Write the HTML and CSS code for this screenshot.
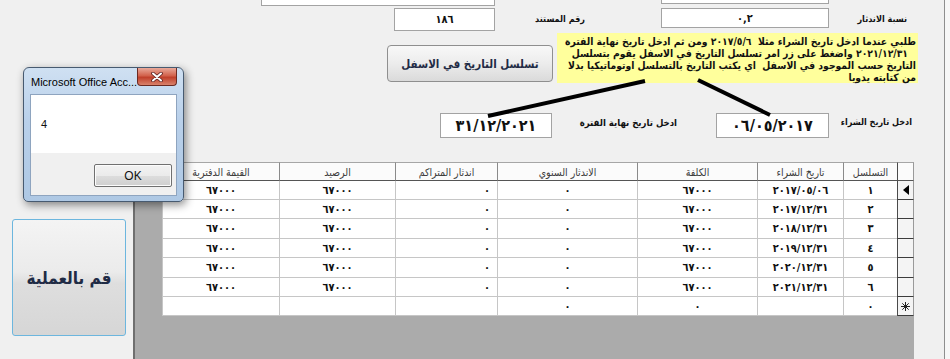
FILE: index.html
```html
<!DOCTYPE html>
<html lang="ar">
<head>
	<meta charset="UTF-8">
	<title>تسلسل التاريخ</title>
	<link rel="stylesheet" href="styles.css">
</head>
<body>
<div class="form">
	<div class="row top">
		<div class="stub stub-a"></div>
		<div class="stub stub-b"></div>
	</div>

	<div class="row doc">
		<div class="field f-doc">١٨٦</div>
		<div class="lbl l-doc">رقم المستند</div>
		<div class="field f-rate">٠,٢</div>
		<div class="lbl l-rate">نسبة الاندثار</div>
	</div>

	<div class="row note-row">
		<div class="run-btn" dir="rtl">تسلسل التاريخ في الاسفل</div>
		<div class="note" dir="rtl">
			<div>طلبي عندما ادخل تاريخ الشراء مثلا&nbsp; ٢٠١٧/٥/٦ ومن ثم ادخل تاريخ نهاية الفترة</div>
			<div class="indent">٢٠٢١/١٢/٣١ واضغط على زر امر تسلسل التاريخ في الاسفل يقوم بتسلسل</div>
			<div>التاريخ حسب الموجود في الاسفل&nbsp; اي يكتب التاريخ بالتسلسل اوتوماتيكيا بدلا</div>
			<div>من كتابته يدويا</div>
		</div>
	</div>

	<div class="row dates">
		<div class="field f-end">٣١/١٢/٢٠٢١</div>
		<div class="lbl l-end">ادخل تاريخ نهاية الفترة</div>
		<div class="field f-buy">٠٦/٠٥/٢٠١٧</div>
		<div class="lbl l-buy">ادخل تاريخ الشراء</div>
	</div>

	<div class="row lower">
		<div class="big-btn" dir="rtl">قم بالعملية</div>
		<div class="sub">
			<table class="sheet" dir="rtl">
				<thead>
					<tr>
						<th class="sel"></th>
						<th>التسلسل</th>
						<th>تاريخ الشراء</th>
						<th>الكلفة</th>
						<th>الاندثار السنوي</th>
						<th>اندثار المتراكم</th>
						<th>الرصيد</th>
						<th>القيمة الدفترية</th>
					</tr>
				</thead>
				<tbody>
					<tr>
						<td class="sel"><span class="cur"></span></td>
						<td>١</td><td>٢٠١٧/٠٥/٠٦</td><td>٦٧٠٠٠</td><td>٠</td><td class="r">٠</td><td>٦٧٠٠٠</td><td>٦٧٠٠٠</td>
					</tr>
					<tr>
						<td class="sel"></td>
						<td>٢</td><td>٢٠١٧/١٢/٣١</td><td>٦٧٠٠٠</td><td>٠</td><td class="r">٠</td><td>٦٧٠٠٠</td><td>٦٧٠٠٠</td>
					</tr>
					<tr>
						<td class="sel"></td>
						<td>٣</td><td>٢٠١٨/١٢/٣١</td><td>٦٧٠٠٠</td><td>٠</td><td class="r">٠</td><td>٦٧٠٠٠</td><td>٦٧٠٠٠</td>
					</tr>
					<tr>
						<td class="sel"></td>
						<td>٤</td><td>٢٠١٩/١٢/٣١</td><td>٦٧٠٠٠</td><td>٠</td><td class="r">٠</td><td>٦٧٠٠٠</td><td>٦٧٠٠٠</td>
					</tr>
					<tr>
						<td class="sel"></td>
						<td>٥</td><td>٢٠٢٠/١٢/٣١</td><td>٦٧٠٠٠</td><td>٠</td><td class="r">٠</td><td>٦٧٠٠٠</td><td>٦٧٠٠٠</td>
					</tr>
					<tr>
						<td class="sel"></td>
						<td>٦</td><td>٢٠٢١/١٢/٣١</td><td>٦٧٠٠٠</td><td>٠</td><td class="r">٠</td><td>٦٧٠٠٠</td><td>٦٧٠٠٠</td>
					</tr>
					<tr>
						<td class="sel">
							<svg class="star" width="9" height="9" viewBox="0 0 9 9">
								<path d="M4.5 0V9M0 4.5H9M1.3 1.3L7.7 7.7M7.7 1.3L1.3 7.7" stroke="#222" stroke-width="1"/>
							</svg>
						</td>
						<td>٠</td><td></td><td>٠</td><td>٠</td><td></td><td></td><td></td>
					</tr>
				</tbody>
			</table>
		</div>
	</div>

	<svg class="arrows" width="950" height="359">
		<line x1="645" y1="81" x2="488" y2="116" stroke="#000" stroke-width="4"/>
		<line x1="698" y1="80" x2="770" y2="115" stroke="#000" stroke-width="4"/>
	</svg>

	<div class="msgbox">
		<div class="msg-title">
			<span>Microsoft Office Acc...</span>
			<div class="close">
				<svg width="12" height="10" viewBox="0 0 12 10">
					<path d="M2 1.5L10 8.5M10 1.5L2 8.5" stroke="#5a2020" stroke-width="3.6" stroke-linecap="round"/>
					<path d="M2 1.5L10 8.5M10 1.5L2 8.5" stroke="#fff" stroke-width="2" stroke-linecap="round"/>
				</svg>
			</div>
		</div>
		<div class="msg-body">
			<div class="msg-text">4</div>
			<div class="msg-foot">
				<div class="ok">OK</div>
			</div>
		</div>
	</div>
</div>
</body>
</html>
```

FILE: styles.css
```css
*{
	box-sizing: border-box;
}
body{
	margin: 0;
	width: 950px;
	height: 359px;
	overflow: hidden;
	background-color: #f7f7f7;
	font-family: "DejaVu Sans Condensed", "DejaVu Sans", sans-serif;
	font-stretch: condensed;
	color: #111;
}
.form{
	position: relative;
	width: 945px;
	height: 359px;
	background-color: #f0f0f0;
	border-right: 1px solid #8e8e8e;
}
.row{
	display: flex;
	align-items: flex-start;
}

/* text boxes and labels */
.top{
	height: 8px;
}
.stub{
	background-color: #fff;
	border: 1px solid #a3a3a3;
	border-top: 0;
}
.stub-a{
	margin-left: 261px;
	width: 234px;
	height: 6px;
}
.stub-b{
	margin-left: 166px;
	width: 168px;
	height: 4px;
}
.field{
	display: flex;
	align-items: center;
	justify-content: center;
	background-color: #fff;
	border: 1px solid #a3a3a3;
	font-weight: bold;
	font-size: 11px;
}
.lbl{
	direction: rtl;
	text-align: right;
	font-size: 9px;
	font-weight: bold;
	white-space: nowrap;
}
.doc{
	height: 25px;
}
.f-doc{
	margin-left: 394px;
	width: 101px;
	height: 23px;
}
.l-doc{
	width: 90px;
	padding-top: 6px;
}
.f-rate{
	margin-left: 76px;
	width: 168px;
	height: 20px;
}
.l-rate{
	width: 78px;
	padding-top: 6px;
}

/* button and note */
.note-row{
	height: 50px;
}
.run-btn{
	display: flex;
	align-items: center;
	justify-content: center;
	margin-left: 387px;
	margin-top: 12px;
	width: 166px;
	height: 37px;
	border: 1px solid #8f8f8f;
	border-radius: 4px;
	background: linear-gradient(#f8f8f8, #ececec 50%, #dadada);
	font-size: 11.5px;
	font-weight: bold;
	color: #1f2b45;
	white-space: nowrap;
}
.note{
	margin-left: 4px;
	width: 361px;
	height: 50px;
	padding: 2px 2px 0 0;
	background-color: #ffff9c;
	font-size: 10.3px;
	font-weight: bold;
	line-height: 12px;
	text-align: right;
	white-space: nowrap;
}
.note .indent{
	padding-right: 8px;
}

.dates{
	margin-top: 30px;
	height: 25px;
}
.f-end{
	margin-left: 440px;
	width: 112px;
	height: 25px;
	font-size: 16px;
	font-stretch: normal;
}
.l-end{
	width: 125px;
	padding-top: 4px;
	font-size: 9.5px;
}
.f-buy{
	margin-left: 39px;
	width: 113px;
	height: 25px;
	font-size: 16px;
	font-stretch: normal;
}
.l-buy{
	width: 83px;
	padding-top: 4px;
}

/* lower part */
.lower{
	margin-top: 24px;
	height: 197px;
}
.big-btn{
	display: flex;
	align-items: center;
	justify-content: center;
	margin-left: 12px;
	margin-top: 57px;
	width: 114px;
	height: 117px;
	border: 1px solid #6cb6de;
	border-radius: 3px;
	background: linear-gradient(#f4f4f4, #ebebeb 45%, #dedede 55%, #d6d6d6);
	font-size: 17px;
	font-weight: bold;
	color: #1f2b45;
	white-space: nowrap;
}
.sub{
	display: flex;
	justify-content: flex-end;
	align-items: flex-start;
	margin-left: 7px;
	width: 781px;
	height: 197px;
	background-color: #ababab;
	border-left: 2px solid #6f6f6f;
}
.sheet{
	width: 752px;
	table-layout: fixed;
	border-collapse: separate;
	border-spacing: 0;
	background-color: #fff;
}
.sheet th, .sheet td{
	padding: 0;
	border-left: 1px solid #c6c6c6;
	border-bottom: 1px solid #c6c6c6;
}
.sheet th{
	height: 19px;
	font-size: 10.5px;
	font-weight: normal;
	color: #3c3c3c;
	background-color: #fbfbfb;
	border-top: 1px solid #a6a6a6;
	border-left-color: #8a8a8a;
	border-bottom-color: #555;
	white-space: nowrap;
}
.sheet td{
	height: 19px;
	text-align: center;
	font-size: 11px;
	font-stretch: normal;
	font-weight: bold;
}
.sheet tbody tr:nth-child(3) td,
.sheet tbody tr:nth-child(5) td{
	height: 20px;
}
.sheet td.r{
	text-align: right;
	padding-right: 7px;
}
.sheet .sel{
	width: 17px;
	border-left-color: #4a4a4a;
	border-right: 1px solid #9a9a9a;
}
.sheet td.sel{
	background-color: #f4f4f4;
	border-bottom-color: #3c3c3c;
	line-height: 0;
}
.sheet th:nth-child(2){ width: 54px; }
.sheet th:nth-child(3){ width: 86px; }
.sheet th:nth-child(4){ width: 120px; }
.sheet th:nth-child(5){ width: 140px; }
.sheet th:nth-child(6){ width: 102px; }
.sheet th:nth-child(7){ width: 116px; }
.sheet th:nth-child(8){ width: 117px; }
.cur{
	display: inline-block;
	width: 0;
	height: 0;
	border-top: 5px solid transparent;
	border-bottom: 5px solid transparent;
	border-right: 6px solid #000;
}

.arrows{
	position: absolute;
	left: 0;
	top: 0;
	pointer-events: none;
}

/* message box */
.msgbox{
	position: absolute;
	left: 23px;
	top: 67px;
	width: 161px;
	height: 135px;
	padding: 0 6px 5px 6px;
	border: 1px solid #475a70;
	border-radius: 6px 6px 5px 5px;
	background: linear-gradient(#cfe0f2, #b9d0ea 40%, #aec8e4);
	box-shadow: 2px 3px 8px rgba(0, 0, 0, 0.45);
	font-stretch: normal;
}
.msg-title{
	display: flex;
	justify-content: space-between;
	align-items: flex-start;
	height: 26px;
	font-family: "Liberation Sans", sans-serif;
	font-size: 11px;
	color: #000;
	white-space: nowrap;
}
.msg-title span{
	padding: 8px 0 0 1px;
}
.close{
	display: flex;
	align-items: center;
	justify-content: center;
	width: 40px;
	height: 18px;
	border: 1px solid #6b2a22;
	border-top: 0;
	border-radius: 0 0 4px 4px;
	background: linear-gradient(#e9a99a, #d2624c 45%, #c0402b 55%, #d9826c);
}
.msg-body{
	height: 102px;
	border: 1px solid #8ea4bf;
	background-color: #f0f0f0;
}
.msg-text{
	display: flex;
	align-items: center;
	height: 58px;
	padding-left: 10px;
	background-color: #fff;
	font-family: "Liberation Sans", sans-serif;
	font-size: 11px;
}
.msg-foot{
	display: flex;
	justify-content: flex-end;
	padding: 11px 4px 0 0;
}
.ok{
	display: flex;
	align-items: center;
	justify-content: center;
	width: 78px;
	height: 23px;
	border: 1px solid #707070;
	border-radius: 2px;
	box-shadow: inset 0 0 0 1px #fcfcfc;
	background: linear-gradient(#f2f2f2, #ebebeb 50%, #dddddd 51%, #cfcfcf);
	font-family: "Liberation Sans", sans-serif;
	font-size: 12px;
}
```
